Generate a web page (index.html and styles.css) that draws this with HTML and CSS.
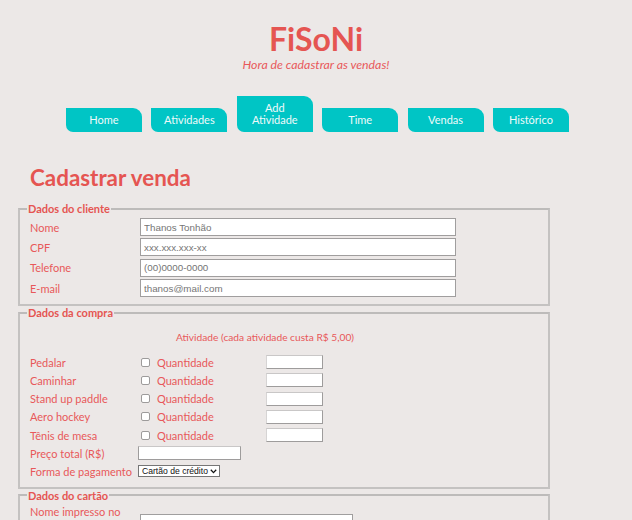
FILE: index.html
```html
<!DOCTYPE html>
<html lang="pt-BR">
<head>
<meta charset="utf-8">
<title>FiSoNi</title>
<link rel="stylesheet" href="styles.css">
</head>
<body>
<header class="header">
  <h1 class="brand">FiSoNi</h1>
  <p class="tagline">Hora de cadastrar as vendas!</p>
</header>
<nav class="nav">
  <a class="tab" href="#">Home</a>
  <a class="tab" href="#">Atividades</a>
  <a class="tab tab-tall" href="#">Add<br>Atividade</a>
  <a class="tab" href="#">Time</a>
  <a class="tab" href="#">Vendas</a>
  <a class="tab" href="#">Histórico</a>
</nav>
<main class="main">
  <h2 class="page-title">Cadastrar venda</h2>
  <form class="form">
    <fieldset class="group group-client">
      <legend class="legend">Dados do cliente</legend>
      <div class="row"><label class="label">Nome</label><input class="text" type="text" placeholder="Thanos Tonhão"></div>
      <div class="row"><label class="label">CPF</label><input class="text" type="text" placeholder="xxx.xxx.xxx-xx"></div>
      <div class="row"><label class="label">Telefone</label><input class="text" type="text" placeholder="(00)0000-0000"></div>
      <div class="row"><label class="label">E-mail</label><input class="text" type="text" placeholder="thanos@mail.com"></div>
    </fieldset>
    <fieldset class="group group-buy">
      <legend class="legend">Dados da compra</legend>
      <p class="note">Atividade (cada atividade custa R$ 5,00)</p>
      <div class="act"><span class="label">Pedalar</span><span class="check"></span><span class="qty-label">Quantidade</span><input class="qty" type="text"></div>
      <div class="act"><span class="label">Caminhar</span><span class="check"></span><span class="qty-label">Quantidade</span><input class="qty" type="text"></div>
      <div class="act"><span class="label">Stand up paddle</span><span class="check"></span><span class="qty-label">Quantidade</span><input class="qty" type="text"></div>
      <div class="act"><span class="label">Aero hockey</span><span class="check"></span><span class="qty-label">Quantidade</span><input class="qty" type="text"></div>
      <div class="act"><span class="label">Tênis de mesa</span><span class="check"></span><span class="qty-label">Quantidade</span><input class="qty" type="text"></div>
      <div class="act"><span class="label label-narrow">Preço total (R$)</span><input class="price" type="text"></div>
      <div class="act"><span class="label label-narrow">Forma de pagamento</span><span class="select">Cartão de crédito<svg class="caret" width="7" height="5" viewBox="0 0 7 5"><path d="M0.8 0.8 L3.5 3.6 L6.2 0.8" fill="none" stroke="#111" stroke-width="1.3"/></svg></span></div>
    </fieldset>
    <fieldset class="group group-card">
      <legend class="legend">Dados do cartão</legend>
      <div class="row row-card"><label class="label">Nome impresso no cartão</label><input class="text card" type="text"></div>
    </fieldset>
  </form>
</main>
</body>
</html>
```
FILE: styles.css
```css
html, body {
  background: #ece8e7;
}
body {
  margin: 0;
  font-family: Lato, "Open Sans", sans-serif;
  color: #e8585a;
}
.header {
  text-align: center;
  padding-top: 21px;
}
.brand {
  margin: 0;
  font-size: 32px;
  line-height: 36px;
  font-weight: bold;
  color: #e55552;
}
.tagline {
  margin: 1px 0 0;
  font-size: 12.3px;
  line-height: 14px;
  font-style: italic;
  color: #e8585a;
}
.nav {
  display: flex;
  align-items: flex-end;
  margin: 24px 0 0 66px;
  height: 36px;
}
.tab {
  box-sizing: border-box;
  width: 76px;
  height: 24px;
  margin-right: 9.4px;
  background: #00c5c5;
  color: #eefafa;
  text-decoration: none;
  font-size: 11px;
  line-height: 12px;
  text-align: center;
  padding-top: 6px;
  border-radius: 0 9px 0 7px;
}
.tab-tall {
  height: 36px;
  padding-top: 6px;
}
.main {
  padding: 0 0 0 18px;
}
.page-title {
  margin: 32px 0 0 12px;
  font-size: 22.4px;
  line-height: 28px;
  font-weight: bold;
  color: #e55552;
}
.form {
  margin-top: 10px;
  width: 532px;
}
.group {
  margin: 0;
  padding: 0 10px;
  border: 2px solid #c4c2c1;
  border-top-color: #bdbbba;
}
.group-client {
  padding-top: 2px;
  padding-bottom: 6px;
}
.group-buy {
  padding-bottom: 6px;
}
.legend {
  margin-left: -3px;
  padding: 0 1px;
  font-size: 11px;
  line-height: 13px;
  font-weight: bold;
  color: #e55552;
}
.row {
  display: flex;
  align-items: center;
  height: 20.3px;
}
.label {
  width: 110px;
  flex: none;
  font-size: 11px;
  white-space: nowrap;
  color: #e8585a;
}
.text {
  box-sizing: border-box;
  width: 316px;
  height: 18px;
  border: 1px solid #a09e9e;
  background: #fff;
  font-family: "Liberation Sans", Arial, sans-serif;
  font-size: 9.8px;
  padding: 0 3px;
}
.text::placeholder {
  color: #757575;
}
.note {
  margin: 12px 38px 9px 0;
  text-align: center;
  font-size: 10.2px;
  line-height: 13px;
  color: #e8585a;
}
.act {
  display: flex;
  align-items: center;
  height: 18.2px;
}
.check {
  box-sizing: border-box;
  flex: none;
  width: 9px;
  height: 9px;
  margin: 0 7px 0 1px;
  border: 1px solid #9d9b9b;
  border-radius: 2px;
  background: #fff;
}
.qty-label {
  width: 109px;
  font-size: 11px;
  color: #e8585a;
}
.qty {
  box-sizing: border-box;
  width: 57px;
  height: 14px;
  border: 1px solid #9e9c9c;
  border-top-color: #c9c7c7;
  border-left-color: #d6d4d4;
  background: #fff;
}
.label-narrow {
  width: 108px;
}
.price {
  box-sizing: border-box;
  width: 103px;
  height: 14px;
  border: 1px solid #9e9c9c;
  border-top-color: #c9c7c7;
  background: #fff;
}
.select {
  box-sizing: border-box;
  display: inline-flex;
  align-items: center;
  gap: 2px;
  width: 82px;
  height: 12px;
  padding: 0 2px 0 3px;
  font-family: "Liberation Sans", Arial, sans-serif;
  font-size: 8.6px;
  color: #111;
  border: 1px solid #767676;
  background: #fff;
  white-space: nowrap;
}
.caret {
  flex: none;
}
.row-card {
  height: 34px;
  align-items: flex-start;
}
.row-card .label {
  white-space: normal;
  line-height: 14px;
  padding-top: 3px;
}
.card {
  width: 213px;
  margin-top: 12px;
}
```
